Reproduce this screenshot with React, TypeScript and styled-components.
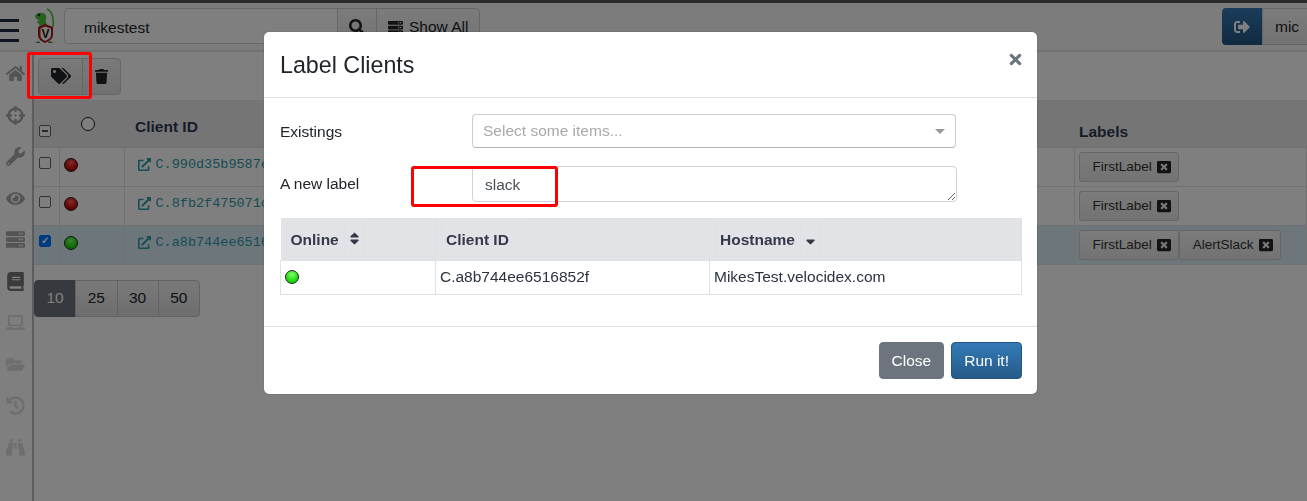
import React from "react"
import styled, { createGlobalStyle } from "styled-components"
import {
  FaBinoculars,
  FaBook,
  FaCrosshairs,
  FaExternalLinkAlt,
  FaEye,
  FaFolderOpen,
  FaHistory,
  FaHome,
  FaLaptop,
  FaSearch,
  FaServer,
  FaSignOutAlt,
  FaSort,
  FaSortDown,
  FaTags,
  FaTimes,
  FaTrash,
  FaWindowClose,
  FaWrench,
} from "react-icons/fa"

const Global = createGlobalStyle`
  html, body {
    margin: 0;
    height: 100%;
    overflow: hidden;
    background: #fff;
    font-family: "Liberation Sans", Arial, sans-serif;
    font-size: 15.5px;
    color: #212529;
  }
  * { box-sizing: border-box; }
`

const Page = styled.div`
  height: 501px;
  width: 1307px;
  display: flex;
  flex-direction: column;
  border-top: 3px solid #555;
  overflow: hidden;
`

const Nav = styled.header`
  height: 49px;
  flex: none;
  display: flex;
  align-items: flex-start;
  background: #f8f8f8;
  border-bottom: 2px solid #e2e2e2;
  padding-top: 5px;
`

const Burger = styled.div`
  width: 19px;
  margin-top: 11px;
  margin-right: 15px;
  display: flex;
  flex-direction: column;
  gap: 7px;
  flex: none;
  span {
    display: block;
    height: 3px;
    background: #1f2a40;
  }
`

const LogoBox = styled.div`
  width: 30px;
  height: 36px;
  flex: none;
  svg { display: block; }
`

const SearchInput = styled.div`
  width: 274px;
  height: 36px;
  flex: none;
  padding: 10px 0 0 19px;
  background: #fff;
  border: 1px solid #ced4da;
  border-radius: 4px 0 0 4px;
`

const NavButton = styled.button`
  height: 36px;
  padding: 2px 11px 0;
  flex: none;
  display: flex;
  align-items: center;
  gap: 6px;
  margin-left: -1px;
  font: inherit;
  color: #212529;
  background: linear-gradient(#f7f7f7, #e6e6e6);
  border: 1px solid #ccc;
  &:last-of-type { border-radius: 0 4px 4px 0; }
`

const NavSpacer = styled.div`
  flex: 1;
`

const UserGroup = styled.div`
  display: flex;
  height: 37px;
  flex: none;
`

const Logout = styled.div`
  width: 40px;
  display: flex;
  align-items: center;
  justify-content: center;
  color: #fff;
  background: linear-gradient(#337ab7, #245580);
  border-radius: 4px 0 0 4px;
`

const UserName = styled.div`
  width: 48px;
  margin-right: -3px;
  display: flex;
  align-items: center;
  padding-left: 12px;
  background: linear-gradient(#f7f7f7, #e6e6e6);
  border: 1px solid #ccc;
`

const Body = styled.div`
  flex: 1;
  display: flex;
  min-height: 0;
`

const Sidebar = styled.nav`
  width: 34px;
  flex: none;
  display: flex;
  flex-direction: column;
  align-items: center;
  gap: 20.5px;
  padding: 11px 2px 0 0;
  background: #fff;
  border-right: 2px solid #bbb;
`

const SideIcon = styled.span<{ $off?: boolean; $dark?: boolean }>`
  display: flex;
  height: 21px;
  align-items: center;
  justify-content: center;
  color: ${(p) => (p.$off ? "#dcdcdc" : p.$dark ? "#777" : "#a9a9a9")};
  font-size: 19px;
`

const Main = styled.main`
  flex: 1;
  min-width: 0;
  background: #fff;
`

const Toolbar = styled.div`
  height: 48px;
  display: flex;
  align-items: center;
  padding: 0 0 0 4px;
`

const ToolGroup = styled.div`
  display: flex;
  height: 37px;
`

const ToolButton = styled.button<{ $w: number }>`
  width: ${(p) => p.$w}px;
  display: flex;
  align-items: center;
  justify-content: center;
  margin-left: -1px;
  padding: 0;
  font-size: 16px;
  color: #212529;
  background: linear-gradient(#f3f3f3, #e2e2e2);
  border: 1px solid #ccc;
  &:first-child { border-radius: 4px 0 0 4px; margin-left: 0; }
  &:last-child { border-radius: 0 4px 4px 0; }
`

const ClientTable = styled.table`
  width: 100%;
  table-layout: fixed;
  border-collapse: collapse;
  td {
    height: 39px;
    border: 1px solid #dee2e6;
    border-width: 1px 1px 1px 0;
    padding: 9px 4px 0;
    font-size: 13.5px;
    vertical-align: top;
  }
`

const HeadCell = styled.th<{ $top: number; $left: number }>`
  height: 47px;
  background: #ebebeb;
  text-align: left;
  color: #2b3a55;
  font-size: 15.5px;
  vertical-align: top;
  padding: ${(p) => p.$top}px 0 0 ${(p) => p.$left}px;
`

const ClientRow = styled.tr<{ $selected?: boolean }>`
  background: ${(p) => (p.$selected ? "#d9edf7" : "#fff")};
`

const Check = styled.span<{ $state?: "on" | "mixed" }>`
  display: flex;
  width: 12px;
  height: 12px;
  align-items: center;
  justify-content: center;
  border-radius: 2px;
  border: 1px solid ${(p) => (p.$state === "on" ? "#0d6efd" : "#666")};
  background: ${(p) => (p.$state === "on" ? "#0075ff" : "#fff")};
  color: #fff;
  font-size: 10px;
  font-weight: bold;
  line-height: 1;
  &::after {
    content: "${(p) => (p.$state === "on" ? "✓" : "")}";
  }
  ${(p) =>
    p.$state === "mixed" &&
    `&::before { content: ""; width: 6px; height: 2px; background: #555; }`}
`

const CheckCell = styled.td`
  && { padding-left: 5px; }
`

const DotCell = styled.td`
  && { padding: 10px 0 0 4px; }
`

const LabelsTd = styled.td`
  && { padding-top: 4px; }
`

const Dot = styled.span<{ $color: "red" | "green" | "none" }>`
  display: block;
  width: 14px;
  height: 14px;
  border-radius: 50%;
  border: 1px solid #222;
  background: ${(p) =>
    p.$color === "red"
      ? "radial-gradient(circle at 50% 30%, #ff5a5a, #c00000 70%)"
      : p.$color === "green"
        ? "radial-gradient(circle at 50% 30%, #7dff6a, #14d400 70%)"
        : "#fff"};
`

const ClientLink = styled.a`
  display: flex;
  align-items: center;
  gap: 5px;
  white-space: nowrap;
  overflow: hidden;
  padding-left: 9px;
  color: #2f9aa8;
  font-family: "Liberation Mono", monospace;
  font-size: 13.5px;
  svg { font-size: 13px; flex: none; }
`

const LabelCell = styled.div`
  display: flex;
`

const LabelChip = styled.span`
  height: 30px;
  display: flex;
  align-items: center;
  gap: 5px;
  padding: 0 7px 0 13px;
  font-size: 13.5px;
  color: #333;
  background: linear-gradient(#f7f7f7, #e6e6e6);
  border: 1px solid #ccc;
  border-radius: 3px;
  svg { font-size: 14px; color: #212529; }
`

const Pager = styled.div`
  display: flex;
  height: 37px;
  margin: 15px 0 0 0;
`

const PageButton = styled.span<{ $active?: boolean }>`
  display: flex;
  align-items: center;
  justify-content: center;
  width: 42.25px;
  color: ${(p) => (p.$active ? "#fff" : "#212529")};
  background: ${(p) => (p.$active ? "#6c757d" : "linear-gradient(#f3f3f3, #dcdcdc)")};
  border: 1px solid ${(p) => (p.$active ? "#6c757d" : "#c4c4c4")};
  margin-left: -1px;
  &:first-child { border-radius: 4px 0 0 4px; margin-left: 0; }
  &:last-child { border-radius: 0 4px 4px 0; }
`

const Backdrop = styled.div`
  position: fixed;
  inset: 0;
  background: rgba(0, 0, 0, 0.5);
`

const Dialog = styled.section`
  position: fixed;
  left: 264px;
  top: 32px;
  width: 773px;
  height: 362px;
  display: flex;
  flex-direction: column;
  background: #fff;
  border-radius: 5px;
  box-shadow: 0 0 1px rgba(0, 0, 0, 0.6);
`

const DialogHeader = styled.div`
  height: 66px;
  flex: none;
  display: flex;
  align-items: center;
  justify-content: space-between;
  padding: 0 13px 0 16px;
  border-bottom: 1px solid #dee2e6;
`

const Title = styled.h4`
  margin: 0;
  padding-top: 2px;
  font-size: 23.25px;
  font-weight: 400;
  color: #212529;
`

const CloseX = styled.span`
  display: flex;
  margin: 0 0 10px;
  color: #6c757d;
  font-size: 17px;
`

const DialogBody = styled.div`
  flex: 1;
  padding: 16px 15px 0 16px;
`

const FormRow = styled.div<{ $h: number; $mb: number }>`
  display: grid;
  grid-template-columns: 192px 1fr;
  align-items: center;
  height: ${(p) => p.$h}px;
  margin-bottom: ${(p) => p.$mb}px;
`

const FieldLabel = styled.span<{ $down?: number }>`
  padding-top: ${(p) => p.$down ?? 0}px;
`

const SelectBox = styled.div`
  width: 484px;
  height: 100%;
  display: flex;
  align-items: center;
  justify-content: space-between;
  padding: 0 10px;
  color: #a9a9a9;
  border: 1px solid #ccc;
  border-bottom-color: #b4b4b4;
  border-radius: 4px;
  &::after {
    content: "";
    border: 5px solid transparent;
    border-top: 5px solid #999;
    border-bottom: 0;
  }
`

const NewLabel = styled.textarea`
  width: 485px;
  height: 36px;
  display: block;
  padding: 9px 12px 0;
  font: inherit;
  line-height: 18px;
  color: #495057;
  border: 1px solid #ced4da;
  border-radius: 4px;
  outline: none;
`

const SelectedTable = styled.table`
  width: 742px;
  table-layout: fixed;
  border-collapse: collapse;
  th {
    height: 42px;
    padding: 0 5px;
    background: #e1e3e6;
    text-align: left;
    border-right: 1px solid #dee0e3;
  }
  td {
    height: 34px;
    padding: 0 4px 1px;
    border: 1px solid #dee2e6;
    color: #2b3340;
  }
`

const HeadBox = styled.div`
  display: flex;
  height: 32px;
  align-items: stretch;
  color: #343a4a;
  font-weight: bold;
`

const HeadName = styled.span`
  display: flex;
  align-items: center;
  padding: 2px 5px 0 4px;
  border: 1px solid #dee0e3;
`

const SortSlot = styled.span<{ $narrow?: boolean }>`
  display: flex;
  align-items: center;
  justify-content: center;
  width: ${(p) => (p.$narrow ? 11 : 20)}px;
  padding: 0;
  font-size: 15px;
  border: 1px solid #dee0e3;
  border-left: 0;
`

const DialogFooter = styled.div`
  height: 68px;
  flex: none;
  display: flex;
  justify-content: flex-end;
  align-items: flex-start;
  gap: 7px;
  padding: 15px 15px 0;
  border-top: 1px solid #dee2e6;
`

const FooterButton = styled.button<{ $primary?: boolean }>`
  height: 37px;
  padding: 0 12px;
  font: inherit;
  color: #fff;
  border-radius: 4px;
  border: 1px solid ${(p) => (p.$primary ? "#245580" : "#6c757d")};
  background: ${(p) => (p.$primary ? "linear-gradient(#337ab7, #265a88)" : "#6c757d")};
`

const Annotation = styled.div<{ $x: number; $y: number; $w: number; $h: number }>`
  position: fixed;
  left: ${(p) => p.$x}px;
  top: ${(p) => p.$y}px;
  width: ${(p) => p.$w}px;
  height: ${(p) => p.$h}px;
  border: 3px solid #f00;
  border-radius: 3px;
`

const Logo = () => (
  <svg width="22" height="36" viewBox="0 0 22 36">
    <path d="M13 1c5 2 7 8 6 18" fill="none" stroke="#4fc43a" strokeWidth="1.6" />
    <path
      d="M1 8c1-3 5-4 8-3 3 1 4 4 3 6-1 3 1 4 1 6l-7 1c-1-3-3-3-3-5l3-1c-2 0-5-1-5-4z"
      fill="#4fc43a"
    />
    <circle cx="5" cy="7" r="1.2" fill="#111" />
    <path d="M4 19l7-3 8 3v8c0 4-4 6-8 8-4-2-7-4-7-8z" fill="#a81818" />
    <path d="M6.500 20.500l4.500-2 6 2v6.500c0 3-3 4.500-6 6-3-1.500-4.500-3-4.500-6z" fill="#fff" />
    <text x="11.500" y="30" textAnchor="middle" fontSize="12" fontWeight="bold" fill="#222" fontFamily="Liberation Sans">
      V
    </text>
    <path d="M1 35l4-2 1 2zM15 33l5 2h-6z" fill="#2e8a20" />
  </svg>
)

const clients = [
  { id: "C.990d35b9587e", color: "red" as const, labels: ["FirstLabel"] },
  { id: "C.8fb2f475071c", color: "red" as const, labels: ["FirstLabel"] },
  { id: "C.a8b744ee6516", color: "green" as const, labels: ["FirstLabel", "AlertSlack"], selected: true },
]

const App = () => {
  return (
    <>
      <Global />
      <Page>
        <Nav>
          <Burger>
            <span />
            <span />
            <span />
          </Burger>
          <LogoBox>
            <Logo />
          </LogoBox>
          <SearchInput>mikestest</SearchInput>
          <NavButton>
            <FaSearch size={16} />
          </NavButton>
          <NavButton>
            <FaServer size={15} /> Show All
          </NavButton>
          <NavSpacer />
          <UserGroup>
            <Logout>
              <FaSignOutAlt size={16} />
            </Logout>
            <UserName>mic</UserName>
          </UserGroup>
        </Nav>
        <Body>
          <Sidebar>
            <SideIcon><FaHome /></SideIcon>
            <SideIcon><FaCrosshairs /></SideIcon>
            <SideIcon><FaWrench /></SideIcon>
            <SideIcon><FaEye /></SideIcon>
            <SideIcon><FaServer /></SideIcon>
            <SideIcon $dark><FaBook /></SideIcon>
            <SideIcon $off><FaLaptop /></SideIcon>
            <SideIcon $off><FaFolderOpen /></SideIcon>
            <SideIcon $off><FaHistory /></SideIcon>
            <SideIcon $off><FaBinoculars /></SideIcon>
          </Sidebar>
          <Main>
            <Toolbar>
              <ToolGroup>
                <ToolButton $w={45}><FaTags size={20} /></ToolButton>
                <ToolButton $w={39}><FaTrash size={15} /></ToolButton>
              </ToolGroup>
            </Toolbar>
            <ClientTable>
              <colgroup>
                <col style={{ width: 25 }} />
                <col style={{ width: 65 }} />
                <col style={{ width: 950 }} />
                <col />
              </colgroup>
              <thead>
                <tr>
                  <HeadCell $top={25} $left={5}><Check $state="mixed" /></HeadCell>
                  <HeadCell $top={17} $left={22}><Dot $color="none" /></HeadCell>
                  <HeadCell $top={18} $left={11}>Client ID</HeadCell>
                  <HeadCell $top={23} $left={5}>Labels</HeadCell>
                </tr>
              </thead>
              <tbody>
                {clients.map((c) => (
                  <ClientRow key={c.id} $selected={c.selected}>
                    <CheckCell><Check $state={c.selected ? "on" : undefined} /></CheckCell>
                    <DotCell><Dot $color={c.color} /></DotCell>
                    <td>
                      <ClientLink><FaExternalLinkAlt />{c.id}</ClientLink>
                    </td>
                    <LabelsTd>
                      <LabelCell>
                        {c.labels.map((l) => (
                          <LabelChip key={l}>{l}<FaWindowClose /></LabelChip>
                        ))}
                      </LabelCell>
                    </LabelsTd>
                  </ClientRow>
                ))}
              </tbody>
            </ClientTable>
            <Pager>
              <PageButton $active>10</PageButton>
              <PageButton>25</PageButton>
              <PageButton>30</PageButton>
              <PageButton>50</PageButton>
            </Pager>
          </Main>
        </Body>
      </Page>
      <Backdrop />
      <Dialog>
        <DialogHeader>
          <Title>Label Clients</Title>
          <CloseX><FaTimes /></CloseX>
        </DialogHeader>
        <DialogBody>
          <FormRow $h={34} $mb={18}>
            <FieldLabel $down={2}>Existings</FieldLabel>
            <SelectBox>Select some items...</SelectBox>
          </FormRow>
          <FormRow $h={36} $mb={16}>
            <FieldLabel>A new label</FieldLabel>
            <NewLabel defaultValue="slack" />
          </FormRow>
          <SelectedTable>
            <colgroup>
              <col style={{ width: 155 }} />
              <col style={{ width: 274 }} />
              <col />
            </colgroup>
            <thead>
              <tr>
                <th>
                  <HeadBox>
                    <HeadName>Online</HeadName>
                    <SortSlot><FaSort /></SortSlot>
                  </HeadBox>
                </th>
                <th>
                  <HeadBox>
                    <HeadName>Client ID</HeadName>
                    <SortSlot $narrow />
                  </HeadBox>
                </th>
                <th>
                  <HeadBox>
                    <HeadName>Hostname</HeadName>
                    <SortSlot><FaSortDown /></SortSlot>
                  </HeadBox>
                </th>
              </tr>
            </thead>
            <tbody>
              <tr>
                <td><Dot $color="green" /></td>
                <td>C.a8b744ee6516852f</td>
                <td>MikesTest.velocidex.com</td>
              </tr>
            </tbody>
          </SelectedTable>
        </DialogBody>
        <DialogFooter>
          <FooterButton>Close</FooterButton>
          <FooterButton $primary>Run it!</FooterButton>
        </DialogFooter>
      </Dialog>
      <Annotation $x={27} $y={52} $w={65} $h={47} />
      <Annotation $x={411} $y={166} $w={147} $h={41} />
    </>
  )
}

export default App
